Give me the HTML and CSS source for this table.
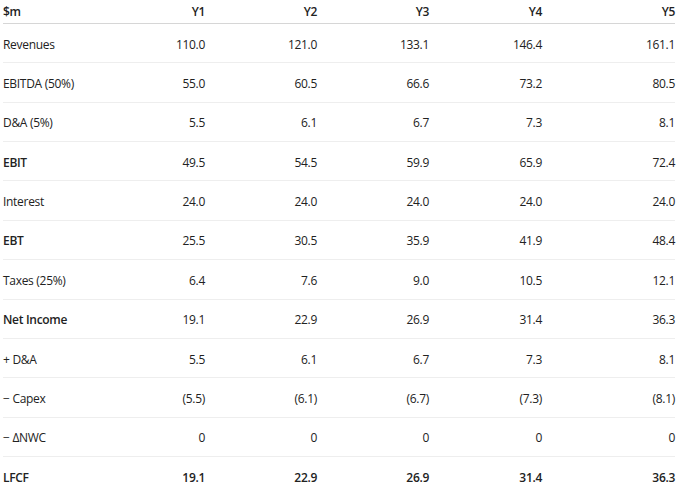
FILE: index.html
```html
<!DOCTYPE html>
<html>
<head>
<meta charset="utf-8">
<link rel="stylesheet" href="styles.css">
</head>
<body>
<table class="fin">
  <colgroup>
    <col class="c-label">
    <col class="c-num">
    <col class="c-num">
    <col class="c-num">
    <col class="c-num4">
    <col class="c-last">
  </colgroup>
  <thead>
    <tr><th class="lbl">$m</th><th>Y1</th><th>Y2</th><th>Y3</th><th>Y4</th><th>Y5</th></tr>
  </thead>
  <tbody>
    <tr><td class="lbl">Revenues</td><td>110.0</td><td>121.0</td><td>133.1</td><td>146.4</td><td>161.1</td></tr>
    <tr><td class="lbl">EBITDA (50%)</td><td>55.0</td><td>60.5</td><td>66.6</td><td>73.2</td><td>80.5</td></tr>
    <tr><td class="lbl">D&amp;A (5%)</td><td>5.5</td><td>6.1</td><td>6.7</td><td>7.3</td><td>8.1</td></tr>
    <tr class="strong"><td class="lbl">EBIT</td><td>49.5</td><td>54.5</td><td>59.9</td><td>65.9</td><td>72.4</td></tr>
    <tr><td class="lbl">Interest</td><td>24.0</td><td>24.0</td><td>24.0</td><td>24.0</td><td>24.0</td></tr>
    <tr class="strong"><td class="lbl">EBT</td><td>25.5</td><td>30.5</td><td>35.9</td><td>41.9</td><td>48.4</td></tr>
    <tr><td class="lbl">Taxes (25%)</td><td>6.4</td><td>7.6</td><td>9.0</td><td>10.5</td><td>12.1</td></tr>
    <tr class="strong"><td class="lbl">Net Income</td><td>19.1</td><td>22.9</td><td>26.9</td><td>31.4</td><td>36.3</td></tr>
    <tr><td class="lbl">+ D&amp;A</td><td>5.5</td><td>6.1</td><td>6.7</td><td>7.3</td><td>8.1</td></tr>
    <tr><td class="lbl">− Capex</td><td>(5.5)</td><td>(6.1)</td><td>(6.7)</td><td>(7.3)</td><td>(8.1)</td></tr>
    <tr><td class="lbl">− ΔNWC</td><td>0</td><td>0</td><td>0</td><td>0</td><td>0</td></tr>
    <tr class="total"><td class="lbl">LFCF</td><td>19.1</td><td>22.9</td><td>26.9</td><td>31.4</td><td>36.3</td></tr>
  </tbody>
</table>
</body>
</html>
```
FILE: styles.css
```css
html, body {
  margin: 0;
  padding: 0;
  background: #ffffff;
}
body {
  font-family: "Open Sans", "Noto Sans", sans-serif;
  font-size: 12px;
  letter-spacing: -0.3px;
  color: #222222;
  overflow: hidden;
}
.fin {
  margin-left: 3px;
  width: 672px;
  border-collapse: collapse;
  table-layout: fixed;
}
.c-label { width: 114px; }
.c-num { width: 112px; }
.c-num4 { width: 113px; }
.c-last { width: 109px; }
.fin th, .fin td {
  text-align: right;
  padding: 0 24px 0 0;
  white-space: nowrap;
}
.fin th:last-child, .fin td:last-child {
  padding-right: 0;
}
.fin .lbl {
  text-align: left;
  padding-left: 0;
}
.fin thead th {
  font-weight: 600;
  height: 22px;
  line-height: 15px;
  padding-top: 0;
  padding-bottom: 1px;
  vertical-align: middle;
  border-bottom: 1px solid #d6d6d6;
}
.fin tbody td {
  height: 36.36px;
  line-height: 15px;
  padding-top: 2px;
  padding-bottom: 0;
  vertical-align: middle;
  border-bottom: 1px solid #eeeeee;
}
.fin tbody tr.strong td.lbl {
  font-weight: 600;
}
.fin tbody tr.total td {
  font-weight: 600;
}
```
